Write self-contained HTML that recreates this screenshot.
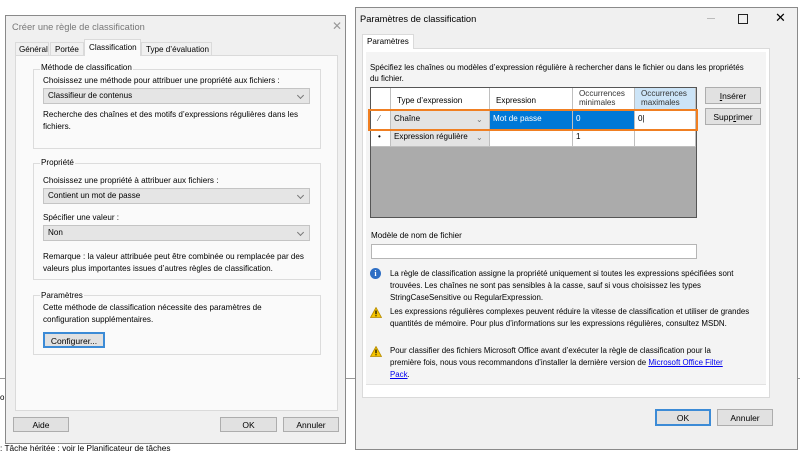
<!DOCTYPE html>
<html><head><meta charset="utf-8"><style>
*{box-sizing:border-box;margin:0;padding:0}
body{width:800px;height:453px;background:#fff;position:relative;overflow:hidden;font-family:"Liberation Sans",sans-serif;font-size:8.1px;color:#000}
.a{position:absolute;white-space:nowrap}
.dlg{position:absolute;background:#f0f0f0;border:1px solid #8a8a8a}
.btn{position:absolute;background:#e1e1e1;border:1px solid #adadad;text-align:center;font-size:8.5px}
.cmb{position:absolute;background:#e5e5e5;border:1px solid #c4c4c4;padding:2px 0 0 4px}
.cmb:after{content:"";position:absolute;right:6px;top:4px;width:4px;height:4px;border-right:1px solid #777;border-bottom:1px solid #777;transform:rotate(45deg)}
.grp{position:absolute;border:1px solid #dcdcdc}
.cell{position:absolute;border-right:1px solid #bfbfbf;border-bottom:1px solid #bfbfbf;background:#fff;padding:3px 0 0 3px}
.t{font-size:7.9px}
</style></head><body>
<div class="a" style="left:0;top:378px;width:5px;height:1px;background:#999"></div>
<div class="a" style="left:345px;top:378px;width:10px;height:1px;background:#999"></div>
<div class="a" style="left:797px;top:378px;width:3px;height:1px;background:#999"></div>
<div class="a" style="left:0;top:393px;font-size:8px">oi</div>
<div class="a" style="left:0;top:443px;font-size:8.3px">: Tâche héritée : voir le Planificateur de tâches</div>

<div class="dlg" style="left:5px;top:15px;width:341px;height:429px"></div>
<div class="a" style="left:12px;top:22px;color:#777;font-size:9.3px">Créer une règle de classification</div>
<div class="a" style="left:332px;top:19px;color:#999;font-size:12px">✕</div>
<div class="a" style="left:15px;top:55px;width:323px;height:356px;background:#fafafa;border:1px solid #dadada"></div>
<div class="a" style="left:15px;top:42px;width:34px;height:14px;border:1px solid #dadada;border-bottom:none;padding:2px 0 0 3px">Général</div>
<div class="a" style="left:50px;top:42px;width:34px;height:14px;border:1px solid #dadada;border-bottom:none;padding:2px 0 0 4px">Portée</div>
<div class="a" style="left:84px;top:39px;width:57px;height:17px;border:1px solid #dadada;border-bottom:none;background:#fafafa;padding:3px 0 0 4px">Classification</div>
<div class="a" style="left:141px;top:42px;width:71px;height:14px;border:1px solid #dadada;border-bottom:none;padding:2px 0 0 4px">Type d’évaluation</div>

<div class="grp" style="left:33px;top:69px;width:288px;height:80px"></div>
<div class="a" style="left:40px;top:63px;background:#fafafa;padding:0 1px">Méthode de classification</div>
<div class="a" style="left:43px;top:76px">Choisissez une méthode pour attribuer une propriété aux fichiers :</div>
<div class="cmb" style="left:43px;top:88px;width:267px;height:16px">Classifieur de contenus</div>
<div class="a" style="left:43px;top:109px;line-height:12px">Recherche des chaînes et des motifs d’expressions régulières dans les<br>fichiers.</div>

<div class="grp" style="left:33px;top:163px;width:288px;height:117px"></div>
<div class="a" style="left:40px;top:158px;background:#fafafa;padding:0 1px">Propriété</div>
<div class="a" style="left:43px;top:176px">Choisissez une propriété à attribuer aux fichiers :</div>
<div class="cmb" style="left:43px;top:188px;width:267px;height:16px">Contient un mot de passe</div>
<div class="a" style="left:43px;top:213px">Spécifier une valeur :</div>
<div class="cmb" style="left:43px;top:225px;width:267px;height:16px">Non</div>
<div class="a" style="left:43px;top:251px;line-height:12px">Remarque : la valeur attribuée peut être combinée ou remplacée par des<br>valeurs plus importantes issues d’autres règles de classification.</div>

<div class="grp" style="left:33px;top:295px;width:288px;height:60px"></div>
<div class="a" style="left:40px;top:291px;background:#fafafa;padding:0 1px">Paramètres</div>
<div class="a" style="left:43px;top:302px;line-height:12px">Cette méthode de classification nécessite des paramètres de<br>configuration supplémentaires.</div>
<div class="btn" style="left:43px;top:332px;width:62px;height:16px;border:2px solid #3c8bd6;padding-top:2px">Configurer...</div>

<div class="btn" style="left:13px;top:417px;width:56px;height:15px;padding-top:2px">Aide</div>
<div class="btn" style="left:220px;top:417px;width:57px;height:15px;padding-top:2px">OK</div>
<div class="btn" style="left:283px;top:417px;width:56px;height:15px;padding-top:2px">Annuler</div>

<div class="dlg" style="left:355px;top:7px;width:443px;height:443px"></div>
<div class="a" style="left:360px;top:14px;font-size:9.3px">Paramètres de classification</div>
<div class="a" style="left:707px;top:18px;width:8px;height:1px;background:#bbb"></div>
<div class="a" style="left:738px;top:14px;width:10px;height:10px;border:1px solid #222"></div>
<div class="a" style="left:775px;top:10px;font-size:13px">✕</div>
<div class="a" style="left:362px;top:48px;width:408px;height:350px;background:#fff;border:1px solid #dadada"></div>
<div class="a" style="left:366px;top:52px;width:400px;height:333px;background:#f4f4f4;border-bottom:1px solid #e2e2e2"></div>
<div class="a" style="left:362px;top:34px;width:52px;height:15px;background:#fff;border:1px solid #dadada;border-bottom:none;padding:2px 0 0 4px">Paramètres</div>
<div class="a t" style="left:370px;top:62px;line-height:11px">Spécifiez les chaînes ou modèles d’expression régulière à rechercher dans le fichier ou dans les propriétés<br>du fichier.</div>

<div class="a" style="left:370px;top:87px;width:327px;height:131px;background:#ababab;border:1px solid #555"></div>
<div class="cell" style="left:371px;top:88px;width:20px;height:23px"></div>
<div class="cell" style="left:391px;top:88px;width:99px;height:23px;padding:8px 0 0 6px">Type d’expression</div>
<div class="cell" style="left:490px;top:88px;width:83px;height:23px;padding:8px 0 0 6px">Expression</div>
<div class="cell" style="left:573px;top:88px;width:62px;height:23px;padding:1px 0 0 6px;line-height:9px;color:#333">Occurrences<br>minimales</div>
<div class="cell" style="left:635px;top:88px;width:61px;height:23px;padding:1px 0 0 6px;line-height:9px;background:#cce4f7;color:#333">Occurrences<br>maximales</div>
<div class="cell" style="left:371px;top:111px;width:20px;height:19px;color:#555">&nbsp;&nbsp;⁄</div>
<div class="cell" style="left:391px;top:111px;width:99px;height:19px;background:#e3e3e3">Chaîne<span style="position:absolute;left:85px;color:#777">⌄</span></div>
<div class="cell" style="left:490px;top:111px;width:83px;height:19px;background:#0078d7;color:#fff">Mot de passe</div>
<div class="cell" style="left:573px;top:111px;width:62px;height:19px;background:#0078d7;color:#fff">0</div>
<div class="cell" style="left:635px;top:111px;width:61px;height:19px">0|</div>
<div class="cell" style="left:371px;top:130px;width:20px;height:17px;padding:2px 0 0 7px">•</div>
<div class="cell" style="left:391px;top:130px;width:99px;height:17px;background:#e3e3e3;padding-top:2px">Expression régulière<span style="position:absolute;left:85px;color:#777">⌄</span></div>
<div class="cell" style="left:490px;top:130px;width:83px;height:17px"></div>
<div class="cell" style="left:573px;top:130px;width:62px;height:17px;padding-top:2px">1</div>
<div class="cell" style="left:635px;top:130px;width:61px;height:17px"></div>
<div class="a" style="left:368px;top:109px;width:330px;height:22px;border:2px solid #f07f22"></div>

<div class="btn" style="left:705px;top:87px;width:56px;height:17px;padding-top:3px"><u>I</u>nsérer</div>
<div class="btn" style="left:705px;top:108px;width:56px;height:17px;padding-top:3px">Supp<u>r</u>imer</div>

<div class="a" style="left:371px;top:231px">Modèle de nom de fichier</div>
<div class="a" style="left:371px;top:244px;width:326px;height:15px;background:#fff;border:1px solid #b5b5b5"></div>

<div class="a" style="left:370px;top:268px;width:11px;height:11px;border-radius:50%;background:#2f6fc4;color:#fff;font-size:8px;font-weight:bold;text-align:center;line-height:11px;font-family:'Liberation Serif',serif">i</div>
<div class="a t" style="left:390px;top:268px;line-height:12px">La règle de classification assigne la propriété uniquement si toutes les expressions spécifiées sont<br>trouvées. Les chaînes ne sont pas sensibles à la casse, sauf si vous choisissez les types<br>StringCaseSensitive ou RegularExpression.</div>
<svg class="a" style="left:370px;top:307px" width="12" height="11" viewBox="0 0 12 11"><path d="M6 0.5L11.5 10.5H0.5Z" fill="#f5c400" stroke="#b58a00" stroke-width="0.8"/><path d="M6 3.5V7.3M6 8.3V9.3" stroke="#000" stroke-width="1.2"/></svg>
<div class="a t" style="left:390px;top:306px;line-height:12px">Les expressions régulières complexes peuvent réduire la vitesse de classification et utiliser de grandes<br>quantités de mémoire. Pour plus d’informations sur les expressions régulières, consultez MSDN.</div>
<svg class="a" style="left:370px;top:346px" width="12" height="11" viewBox="0 0 12 11"><path d="M6 0.5L11.5 10.5H0.5Z" fill="#f5c400" stroke="#b58a00" stroke-width="0.8"/><path d="M6 3.5V7.3M6 8.3V9.3" stroke="#000" stroke-width="1.2"/></svg>
<div class="a t" style="left:390px;top:345px;line-height:12px">Pour classifier des fichiers Microsoft Office avant d’exécuter la règle de classification pour la<br>première fois, nous vous recommandons d’installer la dernière version de <u style="color:#0000ee">Microsoft Office Filter</u><br><u style="color:#0000ee">Pack</u>.</div>

<div class="btn" style="left:655px;top:409px;width:56px;height:17px;border:2px solid #3c8bd6;padding-top:2px">OK</div>
<div class="btn" style="left:717px;top:409px;width:56px;height:17px;padding-top:3px">Annuler</div>
</body></html>
